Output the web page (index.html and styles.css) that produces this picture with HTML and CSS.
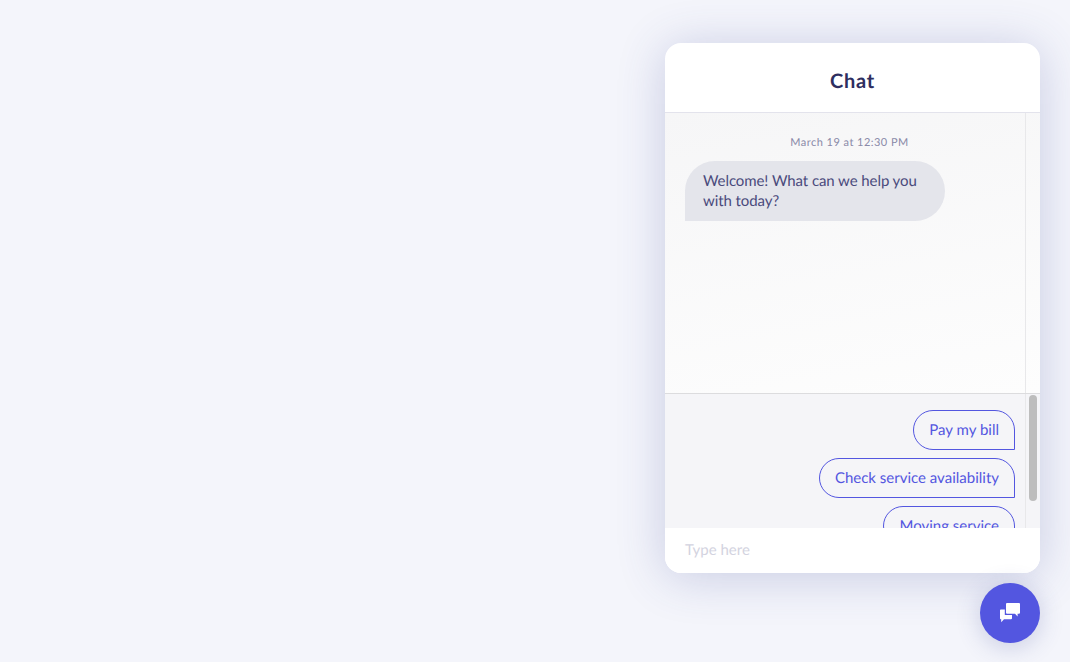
FILE: index.html
```html
<!DOCTYPE html>
<html lang="en">
<head>
<meta charset="utf-8">
<title>Chat</title>
<link rel="stylesheet" href="styles.css">
</head>
<body>
<div class="widget">
  <section class="panel">
    <header class="head">Chat</header>
    <div class="log-row">
      <div class="log">
        <p class="stamp">March 19 at 12:30 PM</p>
        <p class="bubble">Welcome! What can we help you with today?</p>
      </div>
      <div class="track"></div>
    </div>
    <div class="replies-row">
      <div class="replies">
        <button class="reply">Pay my bill</button>
        <button class="reply">Check service availability</button>
        <button class="reply">Moving service</button>
      </div>
      <div class="track track-replies"><div class="thumb"></div></div>
    </div>
    <div class="input">Type here</div>
  </section>
  <button class="fab" aria-label="Open chat">
    <svg class="fab-icon" width="30" height="30" viewBox="0 0 30 30">
      <path class="ic" d="M5.8 11.5H9.8V17H17V20.3A1 1 0 0 1 16 21.3H9L6.2 24.3V21.3H5.8A.8 .8 0 0 1 5 20.5V12.3A.8 .8 0 0 1 5.8 11.5Z"/>
      <path class="ic" d="M12 5H24A1 1 0 0 1 25 6V14.8A1 1 0 0 1 24 15.8H22.6V18.6L20 15.8H12A1 1 0 0 1 11 14.8V6A1 1 0 0 1 12 5Z"/>
    </svg>
  </button>
</div>
</body>
</html>
```
FILE: styles.css
```css
* { box-sizing: border-box; }
html, body { height: 100%; }
body {
  margin: 0;
  height: 662px;
  overflow: hidden;
  background: #f4f5fb;
  font-family: Lato, "Liberation Sans", sans-serif;
  text-rendering: geometricPrecision;
}
.widget {
  display: flex;
  flex-direction: column;
  align-items: flex-end;
  gap: 10px;
  padding: 43px 30px 0 0;
}
.panel {
  width: 375px;
  height: 530px;
  display: flex;
  flex-direction: column;
  background: #fff;
  border-radius: 16px;
  overflow: hidden;
  box-shadow: 0 4px 48px rgba(60, 70, 150, 0.24);
}
.head {
  height: 70px;
  flex: none;
  display: flex;
  align-items: center;
  justify-content: center;
  padding-top: 6px;
  border-bottom: 1px solid #e3e3ec;
  font-size: 20px;
  font-weight: 700;
  letter-spacing: 0.7px;
  color: #2e2e60;
}
.log-row {
  height: 281px;
  flex: none;
  display: flex;
  background: linear-gradient(170deg, #f6f6f7 0%, #fdfdfd 100%);
  border-bottom: 1px solid #dcdcde;
}
.log { flex: 1; padding: 23px 20px 0; }
.track { width: 15px; flex: none; border-left: 1px solid #e8e8ea; }
.stamp {
  margin: 0 0 11px;
  padding-left: 9px;
  text-align: center;
  font-size: 11px;
  line-height: 14px;
  letter-spacing: 0.47px;
  color: #8a8aa8;
}
.bubble {
  margin: 0;
  width: 260px;
  padding: 10px 18px;
  font-size: 15px;
  line-height: 20px;
  letter-spacing: -0.08px;
  color: #4a4a7c;
  background: #e4e5eb;
  border-radius: 30px 30px 30px 0;
}
.replies-row {
  flex: 1;
  min-height: 0;
  display: flex;
  background: #f5f5f8;
  overflow: hidden;
}
.replies {
  flex: 1;
  display: flex;
  flex-direction: column;
  align-items: flex-end;
  gap: 8px;
  padding: 16px 10px 0 0;
}
.reply {
  flex: none;
  height: 40px;
  padding: 0 15px;
  font: 15px/20px Lato, "Liberation Sans", sans-serif;
  text-rendering: geometricPrecision;
  color: #5356e0;
  background: transparent;
  border: 1px solid #5356e0;
  border-radius: 20px 20px 0 20px;
}
.track-replies { padding: 1px 2px 0 3px; }
.thumb {
  width: 8px;
  height: 106px;
  border-radius: 4px;
  background: #bdbdbd;
}
.input {
  height: 45px;
  flex: none;
  padding: 0 20px 1px;
  display: flex;
  align-items: center;
  background: #fff;
  font-size: 15px;
  color: #d3d3e0;
}
.fab {
  width: 60px;
  height: 60px;
  padding: 0;
  display: flex;
  align-items: center;
  justify-content: center;
  border: 0;
  border-radius: 50%;
  background: #5356e0;
  box-shadow: 0 4px 24px rgba(60, 70, 150, 0.24);
}
.ic { fill: #fff; }
```
